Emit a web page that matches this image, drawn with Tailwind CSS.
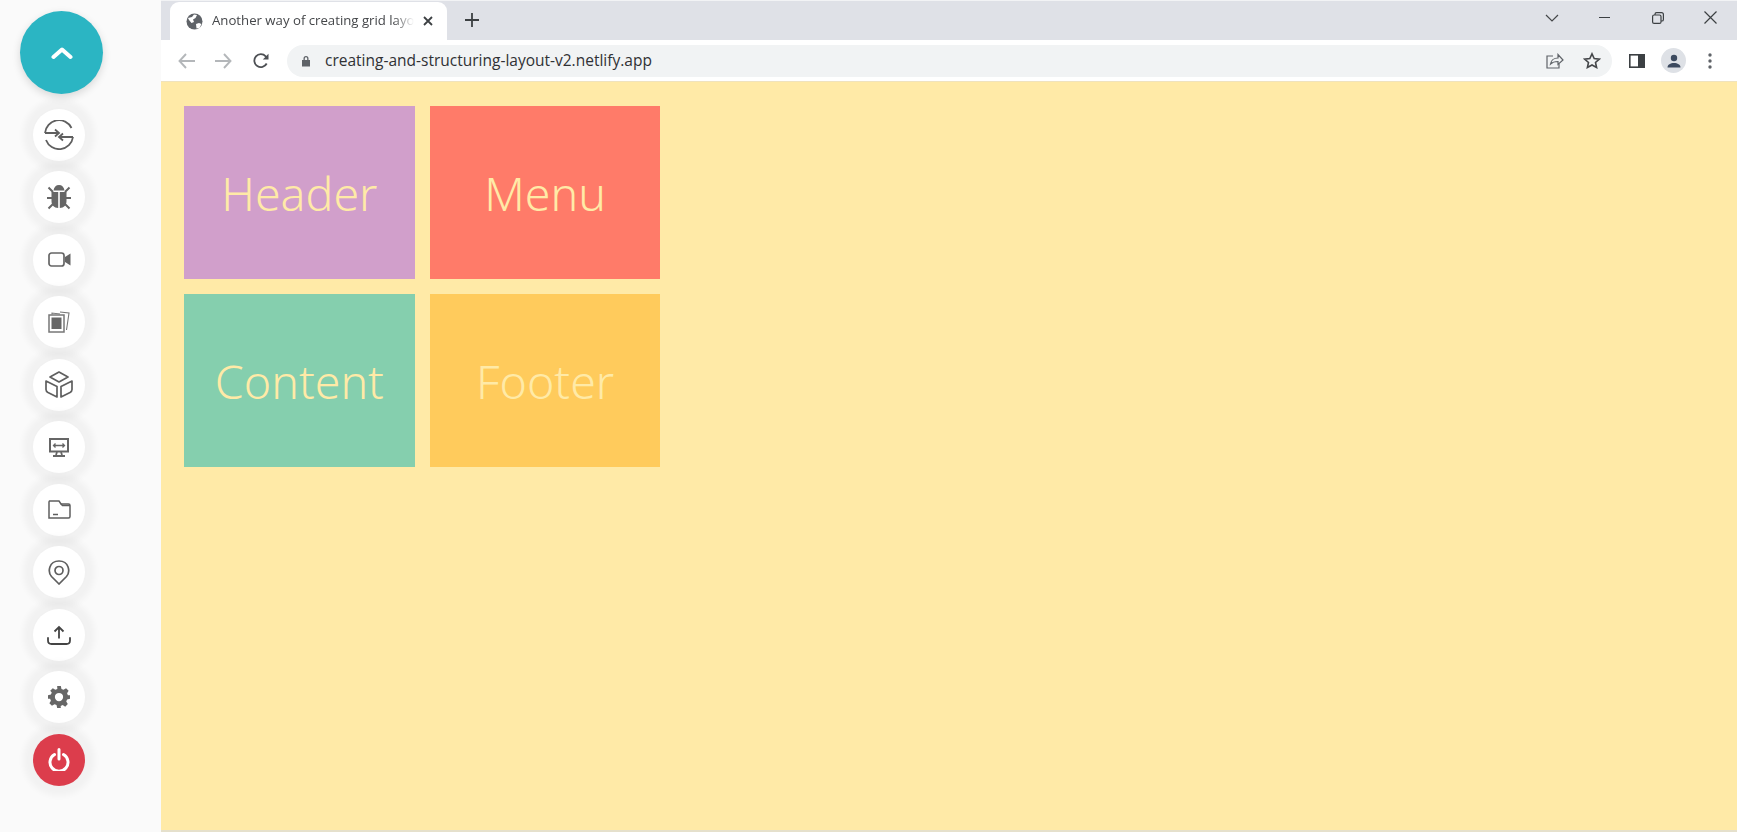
<!DOCTYPE html>
<html lang="en">
<head>
  <meta charset="UTF-8">
  <title>Another way of creating grid layout</title>
  <script src="https://cdn.jsdelivr.net/npm/@tailwindcss/browser@4"></script>
</head>
<body class="h-[832px] w-[1737px] overflow-hidden bg-[#fafafa] font-['Open_Sans',sans-serif]">
<div class="flex h-full">
  <!-- floating menu -->
  <aside class="flex h-full w-[161px] shrink-0 flex-col bg-[#fafafa] pt-[11px]">
    <button class="ml-[20px] flex h-[83px] w-[83px] items-center justify-center rounded-full bg-[#2bb5c3] shadow-[0_3px_8px_rgba(0,0,0,0.14)]">
      <svg width="22" height="14" viewBox="0 0 22 14" fill="none" stroke="#fff" stroke-width="4" stroke-linecap="round" stroke-linejoin="round"><path d="M2.500 11 11 3.500 19.500 11"/></svg>
    </button>
    <div class="ml-[33px] mt-[14.5px] flex flex-col gap-[10.5px]">
      <div class="flex h-[52px] w-[52px] items-center justify-center rounded-full bg-white shadow-[0_0_6px_10px_rgba(0,0,0,0.035)]">
        <svg width="30" height="30" viewBox="0 0 30 30" fill="none" stroke="#5f5f5f" stroke-width="1.800"><path d="M1 13A14 14 0 0 1 27.500 8M1 13H15M11 9.500 15 13 11 16.500M29 17H15M19 13.500 15 17 19 20.500M29 17A14 14 0 0 1 2 20"/></svg>
      </div>
      <div class="flex h-[52px] w-[52px] items-center justify-center rounded-full bg-white shadow-[0_0_6px_10px_rgba(0,0,0,0.035)]">
        <svg width="26" height="26" viewBox="0 0 26 26" fill="#666"><path d="M7.500 6.500C8 3 10 1 13 1s5 2 5.500 5.500zM5.500 8H12.200V24C8 24 5.500 21 5.500 17zM13.800 8h6.700v9C20.500 21 18 24 13.800 24z"/><path d="M2.500 3.500 7 8M23.500 3.500 19 8M1 14H7M25 14H19M2.500 24.500 7 20M23.500 24.500 19 20" stroke="#666" stroke-width="2" fill="none"/></svg>
      </div>
      <div class="flex h-[52px] w-[52px] items-center justify-center rounded-full bg-white shadow-[0_0_6px_10px_rgba(0,0,0,0.035)]">
        <svg width="23" height="15" viewBox="0 0 23 15"><rect x="1" y="1" width="15" height="13" rx="2.500" fill="none" stroke="#666" stroke-width="1.700"/><path d="M17 5 22.500 1.500V13.500L17 10z" fill="#666"/></svg>
      </div>
      <div class="flex h-[52px] w-[52px] items-center justify-center rounded-full bg-white shadow-[0_0_6px_10px_rgba(0,0,0,0.035)]">
        <svg width="22" height="22" viewBox="0 0 22 22" fill="none" stroke="#777" stroke-width="1.100"><rect x="1" y="4" width="15" height="17" stroke-width="1.500"/><rect x="3.500" y="6.500" width="10" height="11.500" fill="#666" stroke="none"/><path d="M4 3.500V2L12 3M12 1 21 2 18.500 19"/></svg>
      </div>
      <div class="flex h-[52px] w-[52px] items-center justify-center rounded-full bg-white shadow-[0_0_6px_10px_rgba(0,0,0,0.035)]">
        <svg width="28" height="27" viewBox="0 0 28 27" fill="none" stroke="#5f5f5f" stroke-width="1.700" stroke-linejoin="round"><path d="M14 1 23 6 14 11 5 6zM1 10 12 15.500V26L3 21.500C1.700 20.800 1 20 1 18.500zM27 10 16 15.500V26L25 21.500C26.300 20.800 27 20 27 18.500z"/></svg>
      </div>
      <div class="flex h-[52px] w-[52px] items-center justify-center rounded-full bg-white shadow-[0_0_6px_10px_rgba(0,0,0,0.035)]">
        <svg width="20" height="19" viewBox="0 0 20 19" fill="none" stroke="#666"><rect x="1" y="1" width="18" height="12.500" stroke-width="2"/><path d="M4.500 7.500H15.500M6.500 5.500 4.500 7.500 6.500 9.500M13.500 5.500 15.500 7.500 13.500 9.500" stroke-width="1.300"/><path d="M8 14 7 17M12 14 13 17M4 18H16" stroke-width="1.800"/></svg>
      </div>
      <div class="flex h-[52px] w-[52px] items-center justify-center rounded-full bg-white shadow-[0_0_6px_10px_rgba(0,0,0,0.035)]">
        <svg width="23" height="19" viewBox="0 0 23 19" fill="none" stroke="#5f5f5f" stroke-width="1.500"><path d="M1 2V18H20.500C21.500 18 22 17.500 22 16.500V5.500C22 4.500 21.500 4 20.500 4H13L11 1H1.500z"/><path d="M13 4 14.500 5.500H22M5 14.500H10" /></svg>
      </div>
      <div class="flex h-[52px] w-[52px] items-center justify-center rounded-full bg-white shadow-[0_0_6px_10px_rgba(0,0,0,0.035)]">
        <svg width="22" height="25" viewBox="0 0 22 25" fill="none" stroke="#5f5f5f" stroke-width="1.700"><path d="M11 24 3.500 16.500C-.5 12 .8 1 11 1s11.500 11 7.500 15.500z"/><circle cx="11" cy="10.500" r="4"/></svg>
      </div>
      <div class="flex h-[52px] w-[52px] items-center justify-center rounded-full bg-white shadow-[0_0_6px_10px_rgba(0,0,0,0.035)]">
        <svg width="24" height="20" viewBox="0 0 24 20" fill="none" stroke="#444" stroke-width="1.800"><path d="M12 13.500V2M7.500 6.500 12 2 16.500 6.500"/><path d="M1 13V15.500C1 17.500 2.500 19 4.500 19H19.500C21.500 19 23 17.500 23 15.500V13" stroke-linecap="round"/></svg>
      </div>
      <div class="flex h-[52px] w-[52px] items-center justify-center rounded-full bg-white shadow-[0_0_6px_10px_rgba(0,0,0,0.035)]">
        <svg width="22" height="22" viewBox="0 0 24 24" fill="#666"><path fill-rule="evenodd" d="M10 0h4l.7 3.200 2.200.900L19.700 2.400l2.800 2.800-1.700 2.800.9 2.200L24 10.000v4l-3.200.7-.9 2.200 1.700 2.800-2.800 2.800-2.800-1.700-2.200.9L14 24h-4l-.7-3.200-2.200-.9-2.800 1.700-2.800-2.800 1.700-2.800-.9-2.200L0 14v-4l3.200-.7.9-2.200L2.400 5.200 5.200 2.400 8 4.100l2.200-.9zM12 7.500a4.500 4.500 0 1 0 0 9 4.500 4.500 0 0 0 0-9z"/></svg>
      </div>
      <div class="flex h-[52px] w-[52px] items-center justify-center rounded-full bg-[#dc3d4c] shadow-[0_0_6px_10px_rgba(0,0,0,0.035)]">
        <svg width="22" height="23" viewBox="0 0 22 23" fill="none" stroke="#fff" stroke-width="3" stroke-linecap="round"><path d="M6.500 6.500a9 9 0 1 0 9 0M11 1.500V11"/></svg>
      </div>
    </div>
  </aside>

  <div class="flex min-w-0 flex-1 flex-col">
    <!-- tab strip -->
    <div class="flex h-[40px] shrink-0 items-end border-t border-[#f2f3f5] bg-[#dfe1e7] pl-[9px]">
      <div class="flex h-[38px] w-[277px] items-center rounded-t-[9px] bg-white pl-[16px]">
        <svg width="17" height="17" viewBox="0 0 17 17"><circle cx="8.500" cy="8.500" r="8" fill="#5f6368"/><path d="M2 5 6 4 8 1.500 11 2 9.500 5 7 6.500 8 9 5.500 10 3 7zM10 11l3-1 2.500 1-2 4-3 .5z" fill="#fff"/></svg>
        <div class="ml-[9px] w-[202px] overflow-hidden whitespace-nowrap text-[13.2px] text-[#45474a] [mask-image:linear-gradient(to_right,#000_90%,transparent)]">Another way of creating grid layout</div>
        <svg class="ml-[9px]" width="10" height="10" viewBox="0 0 10 10" stroke="#3c4043" stroke-width="1.800"><path d="M1 1 9 9M9 1 1 9"/></svg>
      </div>
      <svg class="mb-[13px] ml-[18px]" width="14" height="14" viewBox="0 0 14 14" stroke="#3c4043" stroke-width="1.800"><path d="M7 0V14M0 7H14"/></svg>
      <div class="mb-[16px] ml-auto flex items-center">
        <div class="flex w-[53px] justify-center"><svg width="14" height="8" viewBox="0 0 14 8" fill="none" stroke="#45474a" stroke-width="1.200"><path d="M1 1 7 7 13 1"/></svg></div>
        <div class="flex w-[53px] justify-center"><div class="h-[1.500px] w-[11px] bg-[#3c4043]"></div></div>
        <div class="flex w-[53px] justify-center"><svg width="12" height="12" viewBox="0 0 12 12" fill="none" stroke="#3c4043" stroke-width="1.200"><rect x=".6" y="3" width="8.400" height="8.400" rx="1.500"/><path d="M3 3V2.200C3 1.200 3.600.6 4.600.6H9.500C10.600.6 11.400 1.400 11.400 2.500V7.400C11.400 8.400 10.800 9 9.800 9H9"/></svg></div>
        <div class="flex w-[53px] justify-center pr-[1px]"><svg width="13" height="13" viewBox="0 0 13 13" stroke="#3c4043" stroke-width="1.200"><path d="M.5.500 12.500 12.500M12.500.500 .5 12.500"/></svg></div>
      </div>
    </div>

    <!-- toolbar -->
    <div class="flex h-[42px] shrink-0 items-center border-b border-[#f0e3bd] bg-white">
      <svg class="ml-[17px]" width="17" height="16" viewBox="0 0 17 16" fill="none" stroke="#b4b7ba" stroke-width="1.900"><path d="M17 8H1.500M8 1 1.500 8 8 15"/></svg>
      <svg class="ml-[20px]" width="17" height="16" viewBox="0 0 17 16" fill="none" stroke="#b4b7ba" stroke-width="1.900"><path d="M0 8H15.500M9 1 15.500 8 9 15"/></svg>
      <svg class="ml-[21px]" width="16" height="16" viewBox="0 0 16 16" fill="none" stroke="#4d5054" stroke-width="1.800"><path d="M13.700 10.500A6.500 6.500 0 1 1 12.700 3.300L14.500 5"/><path d="M15.500 .8V6.500H9.800z" fill="#4d5054" stroke="none"/></svg>
      <div class="ml-[18px] flex h-[32px] w-[1325px] items-center rounded-full bg-[#f1f3f4]">
        <svg class="ml-[14px]" width="10" height="12" viewBox="0 0 10 12" fill="#5f6368"><path d="M2.500 5V3.500a2.500 2.500 0 0 1 5 0V5h1.500v6.500H1V5zM3.800 5h2.400V3.500a1.200 1.200 0 0 0-2.400 0z"/></svg>
        <span class="ml-[14px] text-[15.5px] text-[#303134]">creating-and-structuring-layout-v2.netlify.app</span>
        <svg class="ml-auto" width="18" height="16" viewBox="0 0 18 16" fill="none" stroke="#5f6368" stroke-width="1.200"><path d="M7 3H1V15H13V11"/><path d="M4.500 11C5 7.500 8 5 12 5V1.500L17 7 12 11.500V8.500C9 8.500 6.500 9 4.500 11z"/></svg>
        <svg class="ml-[19px] mr-[11px]" width="18" height="17" viewBox="0 0 18 17" fill="none" stroke="#45474a" stroke-width="1.600"><path d="M9 1.800 11.200 6.500 16.300 7.100 12.500 10.500 13.600 15.500 9 13 4.400 15.500 5.500 10.500 1.700 7.100 6.800 6.500z"/></svg>
      </div>
      <svg class="ml-[17px]" width="16" height="14" viewBox="0 0 16 14"><rect x=".8" y=".8" width="14.400" height="12.400" fill="none" stroke="#3c4043" stroke-width="1.600"/><rect x="9" y="1" width="6" height="12" fill="#3c4043"/></svg>
      <div class="ml-[16px] flex h-[25px] w-[25px] items-center justify-center rounded-full bg-[#dee1e6]">
        <svg width="14" height="14" viewBox="0 0 14 14" fill="#3c4a5f"><circle cx="7" cy="4" r="3.200"/><path d="M.5 13.500C.5 10.500 3.500 9 7 9s6.500 1.500 6.500 4.500z"/></svg>
      </div>
      <svg class="ml-[22px]" width="4" height="16" viewBox="0 0 4 16" fill="#5f6368"><circle cx="2" cy="2" r="1.700"/><circle cx="2" cy="8" r="1.700"/><circle cx="2" cy="14" r="1.700"/></svg>
    </div>

    <!-- page -->
    <main class="flex-1 border-b-2 border-[#e5e0cc] bg-[#ffeaa7] pl-[23px] pt-[24px]">
      <div class="grid w-[476.5px] grid-cols-[230.7px_230.7px] grid-rows-[173px_173px] gap-[15px] font-['Noto_Sans',sans-serif] text-[46.5px] font-[350] text-[#ffeaa7]">
        <div class="flex items-center justify-center bg-[#d19fcb] pt-[2px]">Header</div>
        <div class="flex items-center justify-center bg-[#ff7b69] pt-[2px]">Menu</div>
        <div class="flex items-center justify-center bg-[#85cfae] pt-[2px]">Content</div>
        <div class="flex items-center justify-center bg-[#ffcb5c] pt-[2px]">Footer</div>
      </div>
    </main>
  </div>
</div>
</body>
</html>
